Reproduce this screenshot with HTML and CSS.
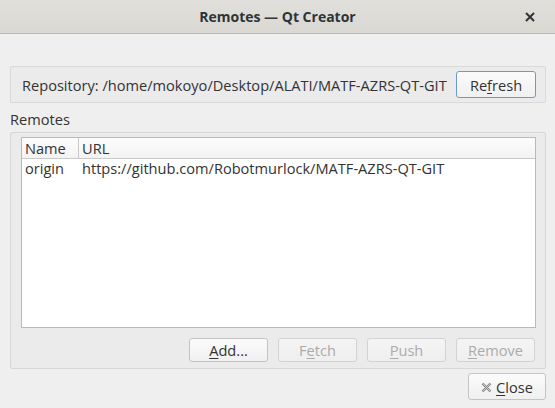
FILE: index.html
```html
<!DOCTYPE html>
<html>
<head>
<meta charset="utf-8">
<link rel="stylesheet" href="styles.css">
</head>
<body>
<div class="titlebar">
  <span class="title">Remotes — Qt Creator</span>
  <span class="tclose">
    <svg width="10" height="10" viewBox="0 0 10 10"><path d="M1 1L9 9M9 1L1 9" stroke="#2e3436" stroke-width="2" fill="none"/></svg>
  </span>
</div>
<div class="content">
  <div class="repo">
    <span class="repo-text">Repository: /home/mokoyo/Desktop/ALATI/MATF-AZRS-QT-GIT</span>
    <button class="btn btn-focus refresh">Re<u>f</u>resh</button>
  </div>
  <div class="group-label">Remotes</div>
  <div class="group">
    <div class="table">
      <div class="thead">
        <div class="c1">Name</div>
        <div class="c2">URL</div>
      </div>
      <div class="trow">
        <div class="c1">origin</div>
        <div class="c2">https://github.com/Robotmurlock/MATF-AZRS-QT-GIT</div>
      </div>
    </div>
    <div class="actions">
      <button class="btn"><u>A</u>dd...</button>
      <button class="btn disabled">F<u>e</u>tch</button>
      <button class="btn disabled"><u>P</u>ush</button>
      <button class="btn disabled"><u>R</u>emove</button>
    </div>
  </div>
  <div class="footer">
    <button class="btn close">
      <svg width="11" height="11" viewBox="0 0 11 11"><path d="M1.5 1.5L9.5 9.5M9.5 1.5L1.5 9.5" stroke="#8a8a8a" stroke-width="2.4" fill="none"/><path d="M1.5 1.5L9.5 9.5M9.5 1.5L1.5 9.5" stroke="#d0d0d0" stroke-width="0.8" fill="none"/></svg>
      <span><u>C</u>lose</span>
    </button>
  </div>
</div>
</body>
</html>
```
FILE: styles.css
```css
* { box-sizing: border-box; }
html, body {
  margin: 0;
  padding: 0;
  width: 555px;
  height: 408px;
  overflow: hidden;
  background: #efefef;
  font-family: "Open Sans", "Noto Sans", sans-serif;
  font-size: 14.6px;
  color: #333333;
}
.titlebar {
  height: 34px;
  background: linear-gradient(#e1dfdb, #dad8d3);
  border-bottom: 1px solid #bcbab5;
  display: flex;
  align-items: center;
  justify-content: center;
  position: relative;
}
.title {
  font-weight: bold;
  font-size: 14px;
  color: #2e3436;
}
.tclose {
  position: absolute;
  right: 20px;
  top: 12px;
  display: flex;
}
.content {
  padding: 32px 9px 0 10px;
  display: flex;
  flex-direction: column;
}
.repo {
  height: 37px;
  background: #ebebeb;
  border: 1px solid #d9d9d9;
  border-radius: 2px;
  display: flex;
  align-items: center;
  justify-content: space-between;
  padding: 0 9px 0 11px;
}
.btn {
  font-family: inherit;
  font-size: 14.6px;
  color: #333333;
  height: 24px;
  width: 79px;
  padding: 0;
  background: linear-gradient(#fbfbfb, #f0f0f0);
  border: 1px solid #c4c4c4;
  border-radius: 3px;
  display: flex;
  align-items: center;
  justify-content: center;
}
.btn u { text-underline-offset: 2px; }
.btn-focus {
  border-color: #6c9ad0;
  height: 27px;
}
.refresh { width: 80px; }
.group-label {
  height: 29px;
  display: flex;
  align-items: center;
  padding-top: 3px;
}
.group {
  height: 237px;
  background: #ebebeb;
  border: 1px solid #d7d7d7;
  border-radius: 2px;
  padding: 4px 9px 0 10px;
  display: flex;
  flex-direction: column;
}
.table {
  height: 191px;
  background: #fff;
  border: 1px solid #b9b9b9;
}
.thead {
  height: 21px;
  display: flex;
  background: linear-gradient(#fdfdfd, #f3f3f3);
  border-bottom: 1px solid #c9c9c9;
}
.thead .c1 { border-right: 1px solid #c9c9c9; }
.thead div, .trow div {
  display: flex;
  align-items: center;
}
.c1 { width: 57px; padding-left: 3px; }
.c2 { padding-left: 3px; }
.trow { height: 17px; display: flex; }
.actions {
  display: flex;
  justify-content: flex-end;
  gap: 10px;
  margin-top: 10px;
  padding-right: 1px;
}
.disabled {
  color: #ababab;
  border-color: #d3d3d3;
  background: linear-gradient(#f4f4f4, #efefef);
}
.footer {
  display: flex;
  justify-content: flex-end;
  margin-top: 4px;
}
.close {
  width: 78px;
  height: 27px;
  gap: 4px;
}
.close svg { margin-top: 1px; }
```
